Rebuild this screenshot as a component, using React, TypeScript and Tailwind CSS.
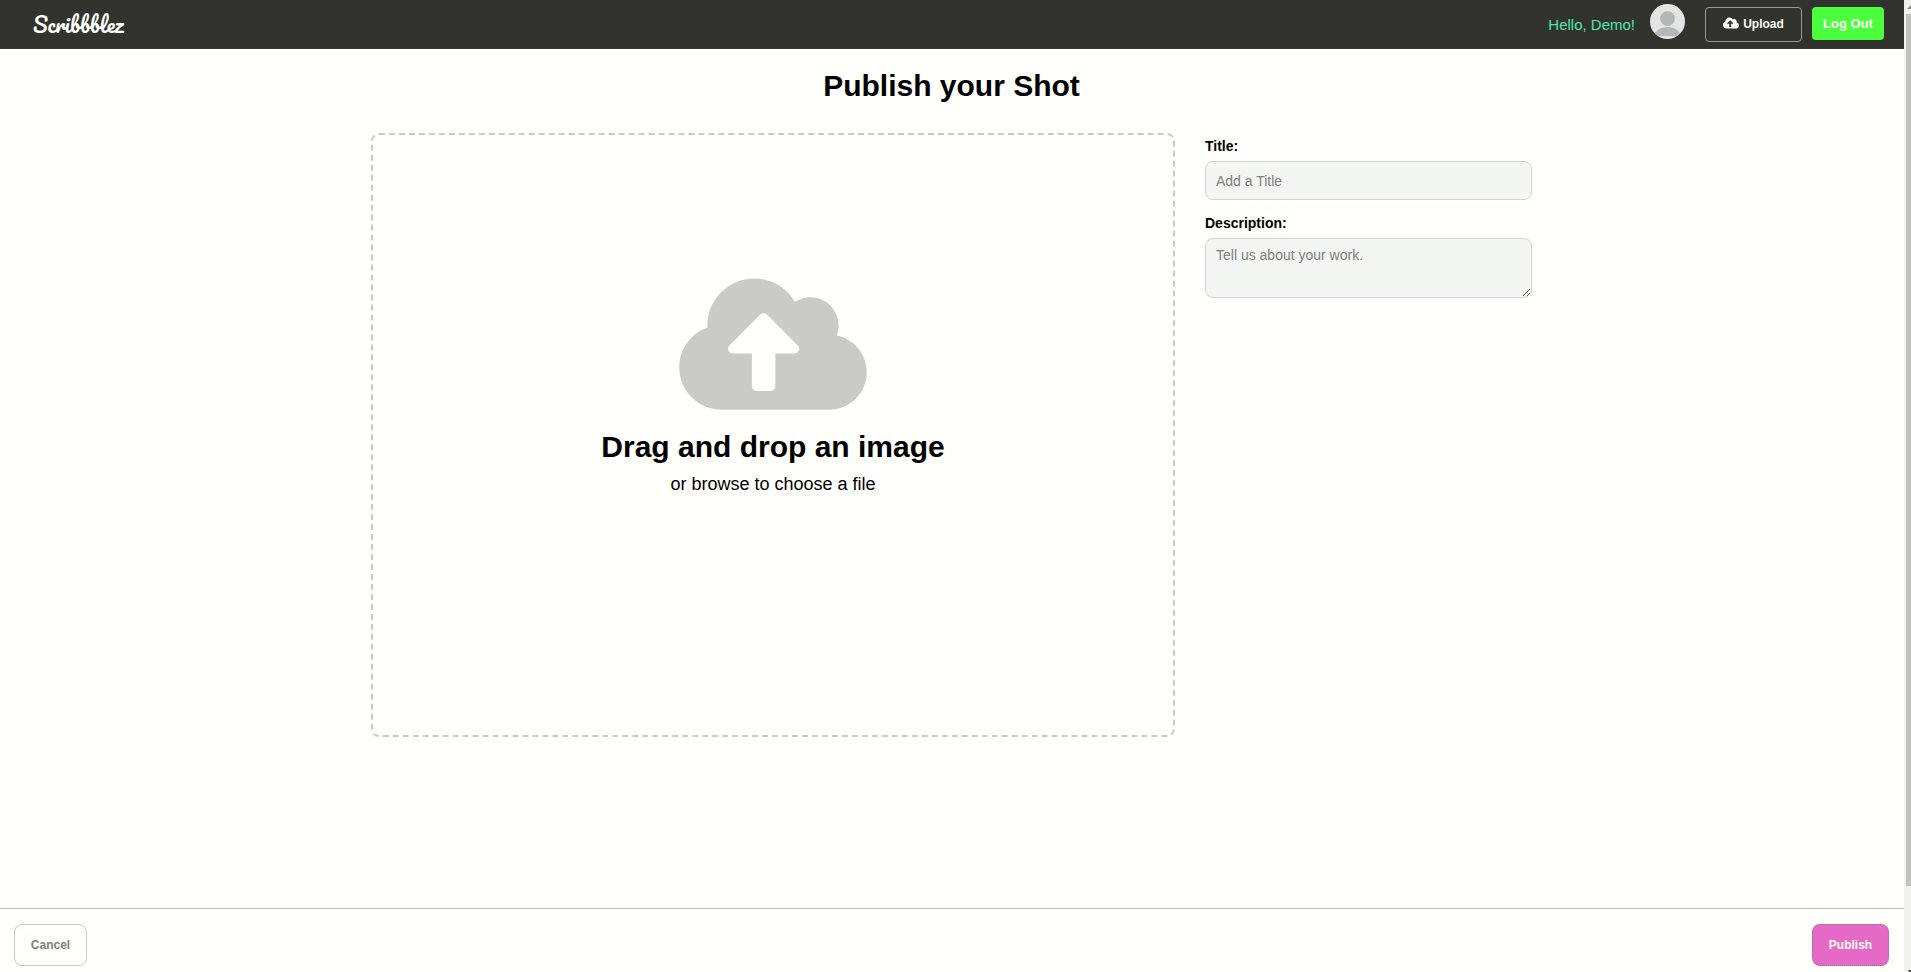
import { FaCloudUploadAlt } from "react-icons/fa";

function Avatar() {
  return (
    <svg viewBox="0 0 35 35" className="size-[35px] rounded-full" role="img" aria-label="Profile">
      <rect width="35" height="35" fill="#e3e5e3" />
      <circle cx="17.5" cy="14.5" r="7.4" fill="#b3b7b7" />
      <path d="M4.5 32C5 26.500 10.500 23 17.500 23S30 26.500 30.500 32Z" fill="#b3b7b7" />
    </svg>
  );
}

function Header() {
  return (
    <header className="flex h-[49px] items-center justify-between bg-[#33332e] pl-[33px] pr-5">
      <a href="#home" className="font-['Pacifico',cursive] text-[21px] leading-7 text-[#fffffc]">
        Scribbblez
      </a>
      <nav className="flex items-start">
        <span className="mt-2 text-[15px] leading-5 text-[#4fe8b0]">Hello, Demo!</span>
        <a href="#profile" className="-mt-[3px] ml-[15px]"><Avatar /></a>
        <button type="button" className="ml-5 flex h-[35px] w-[97px] items-center justify-center gap-1 rounded-[4px] border border-[#999995] pb-[2px] text-xs font-bold text-[#fffffc]">
          <FaCloudUploadAlt className="mb-[2px] size-4" />
          Upload
        </button>
        <button type="button" className="ml-[10px] h-[33px] w-[72px] rounded-[4px] bg-[#4bff3c] text-[13px] font-bold text-[#fffffc]">
          Log Out
        </button>
      </nav>
    </header>
  );
}

function Scrollbar() {
  return (
    <div aria-hidden="true" className="flex w-[7px] shrink-0 flex-col overflow-hidden bg-[#f0f0ee]">
      <svg viewBox="0 0 7 14" className="h-[14px] w-[7px]">
        <path d="M3 9L7 5V9Z" fill="#90918e" />
      </svg>
      <div className="ml-[2px] w-[5px] flex-1 bg-[#c0c1bd]" />
      <svg viewBox="0 0 7 86" className="h-[86px] w-[7px]">
        <path d="M4 84H7V86H5Z" fill="#50504c" />
      </svg>
    </div>
  );
}

export default function App() {
  const field =
    "block w-full rounded-lg border border-[#d1d4cf] bg-[#f4f6f4] px-[10px] text-sm text-black placeholder:text-[#80807c]";
  return (
    <div className="flex min-h-screen bg-[#fffffc] font-['Liberation_Sans',Arial,sans-serif] text-black">
      <div className="flex min-w-0 flex-1 flex-col">
        <Header />
        <main className="flex flex-1 flex-col pr-px">
          <h1 className="mt-5 text-center text-3xl leading-[34px] font-bold">Publish your Shot</h1>
          <form id="shot" className="mt-[30px] flex items-start justify-center gap-[30px]">
            <label className="flex h-[604px] w-[804px] cursor-pointer flex-col items-center rounded-lg border-2 border-dashed border-[#cacbc6] pt-[134px]">
              <FaCloudUploadAlt className="h-[150px] w-[188px] text-[#cacbc6]" />
              <span className="mt-[11px] text-3xl leading-[34px] font-bold">Drag and drop an image</span>
              <span className="mt-[10px] text-lg leading-5">or browse to choose a file</span>
              <input type="file" accept="image/*" className="sr-only" />
            </label>
            <div className="w-[327px] pt-[5px]">
              <label htmlFor="title" className="block text-sm leading-4 font-bold">Title:</label>
              <input id="title" placeholder="Add a Title" className={`${field} mt-[7px] h-[39px]`} />
              <label htmlFor="description" className="mt-[15px] block text-sm leading-4 font-bold">Description:</label>
              <textarea id="description" placeholder="Tell us about your work." className={`${field} mt-[7px] h-[60px] py-2 leading-4`} />
            </div>
          </form>
        </main>
        <footer className="flex h-[64px] items-start justify-between border-t border-[#b9bbb6] pt-[15px] pr-[15px] pl-[14px]">
          <button type="button" className="h-[42px] w-[73px] rounded-lg border border-[#c8c9c4] text-xs font-bold text-[#80807c]">
            Cancel
          </button>
          <button type="submit" form="shot" className="h-[42px] w-[77px] rounded-lg border border-dotted border-[#80807c] bg-[#e669c6] text-xs font-bold text-[#fffffc]">
            Publish
          </button>
        </footer>
      </div>
      <Scrollbar />
    </div>
  );
}
